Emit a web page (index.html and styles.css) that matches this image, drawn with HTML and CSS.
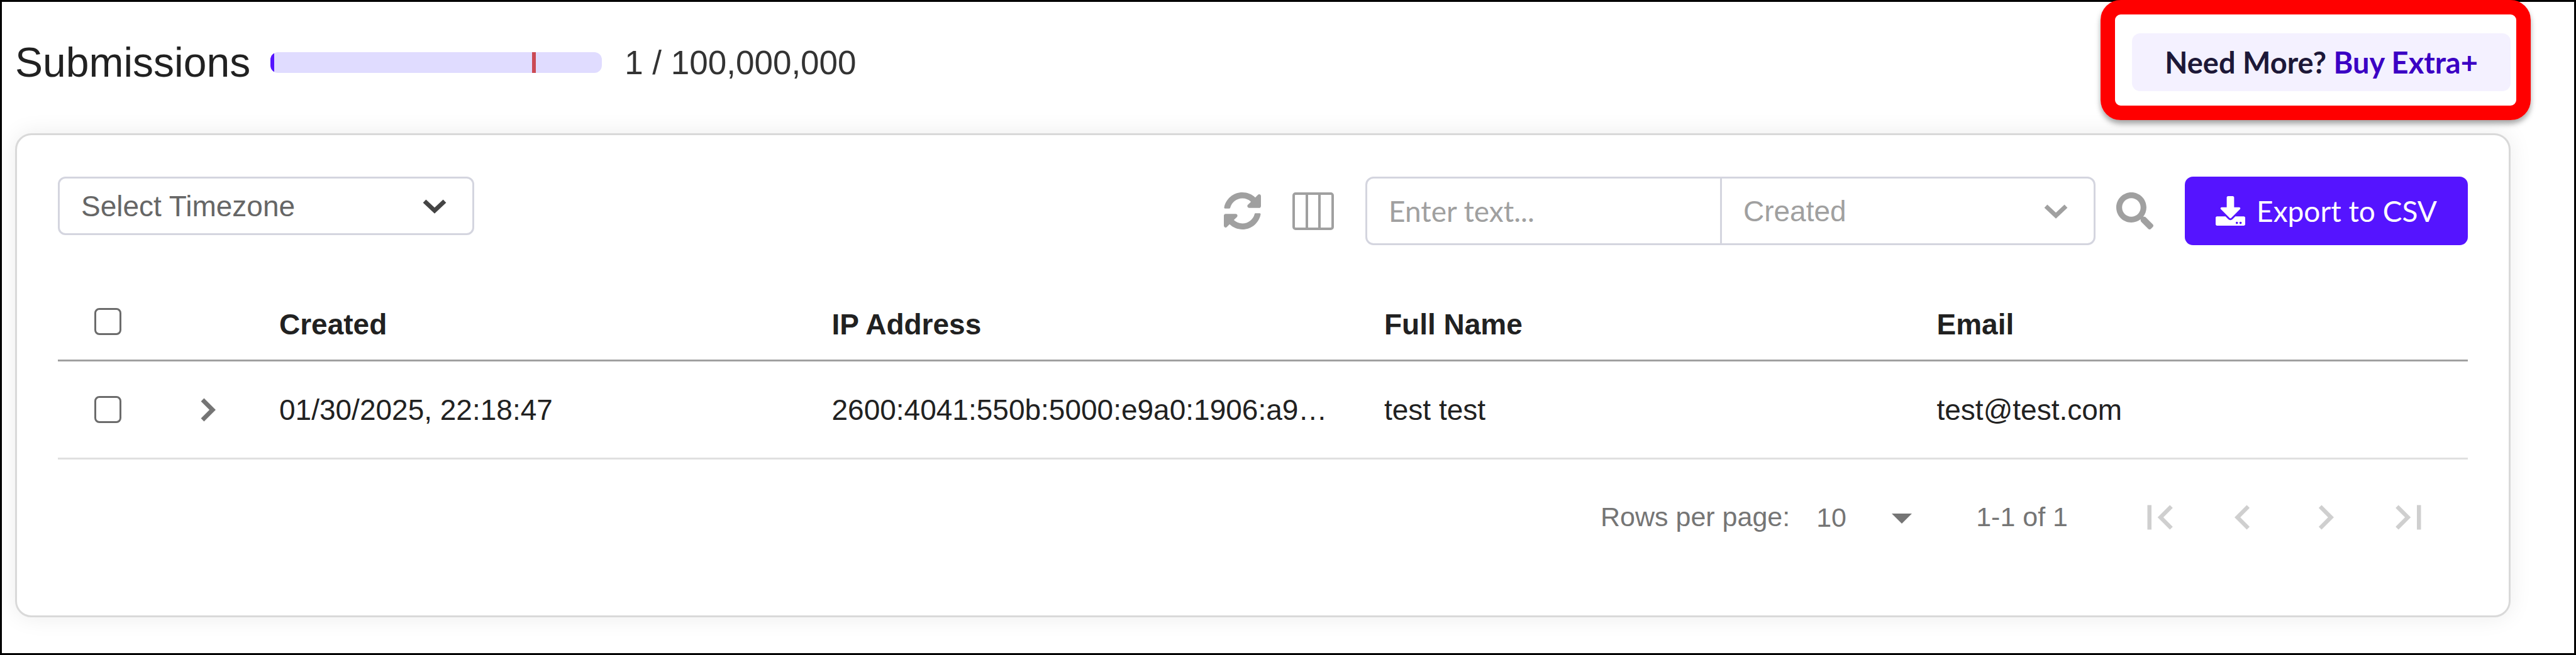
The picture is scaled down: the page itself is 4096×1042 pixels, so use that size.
FILE: index.html
```html
<!DOCTYPE html>
<html lang="en">
<head>
    <meta charset="UTF-8">
    <meta name="viewport" content="width=device-width, initial-scale=1.0">
    <title>Submissions</title>
    <link rel="stylesheet" href="styles.css">
</head>
<body>
    <div class="page">
        <header class="header">
            <h1>Submissions</h1>
            <div class="usage-bar" role="progressbar" aria-labelledby="usageCount" aria-valuemin="0" aria-valuemax="100000000" aria-valuenow="1">
                <div class="usage-fill"></div>
                <div class="usage-limit"></div>
            </div>
            <span class="usage-count" id="usageCount">1 / 100,000,000</span>
            <div class="upgrade">
                <a href="#" class="upgrade-link">Need More? <span>Buy Extra+</span></a>
                <div class="highlight"></div>
            </div>
        </header>

        <main class="card">
            <div class="toolbar">
                <div class="select-wrapper timezone">
                    <select aria-label="Timezone">
                        <option>Select Timezone</option>
                    </select>
                    <svg class="caret" viewBox="0 0 40 24"><path d="M4 4l16 15L36 4"/></svg>
                </div>

                <div class="tools">
                    <button class="icon-button" aria-label="Refresh">
                        <svg class="icon" viewBox="8 8 496 496"><path d="M370.72 133.28C339.458 104.008 298.888 87.962 255.848 88c-77.458.068-144.328 53.178-162.791 126.85-1.344 5.363-6.122 9.15-11.651 9.15H24.103c-7.498 0-13.194-6.807-11.807-14.176C33.933 94.924 134.813 8 256 8c66.448 0 126.791 26.136 171.315 68.685L463.03 40.97C478.149 25.851 504 36.559 504 57.941V192c0 13.255-10.745 24-24 24H345.941c-21.382 0-32.09-25.851-16.971-40.971l41.75-41.749zM32 296h134.059c21.382 0 32.09 25.851 16.971 40.971l-41.75 41.75c31.262 29.273 71.835 45.319 114.876 45.28 77.418-.07 144.315-53.144 162.787-126.849 1.344-5.363 6.122-9.15 11.651-9.15h57.304c7.498 0 13.194 6.807 11.807 14.176C478.067 417.076 377.187 504 256 504c-66.448 0-126.791-26.136-171.315-68.685L48.97 471.03C33.851 486.149 8 475.441 8 454.059V320c0-13.255 10.745-24 24-24z"/></svg>
                    </button>
                    <button class="icon-button columns" aria-label="Columns">
                        <svg class="icon icon-columns" viewBox="0 0 66 60"><rect x="2" y="2" width="62" height="56" rx="3"/><path d="M23 2v56M43 2v56"/></svg>
                    </button>
                    <div class="search-group">
                        <input type="text" class="search-input" placeholder="Enter text..." aria-label="Search text">
                        <div class="select-wrapper field">
                            <select aria-label="Search field">
                                <option>Created</option>
                            </select>
                            <svg class="caret" viewBox="0 0 40 24"><path d="M4 4l16 15L36 4"/></svg>
                        </div>
                    </div>
                    <button class="icon-button search" aria-label="Search">
                        <svg class="icon" viewBox="0 0 512 512"><path d="M505 442.7L405.3 343c-4.5-4.5-10.6-7-17-7H372c27.6-35.3 44-79.7 44-128C416 93.1 322.9 0 208 0S0 93.1 0 208s93.1 208 208 208c48.3 0 92.7-16.4 128-44v16.3c0 6.4 2.5 12.5 7 17l99.7 99.7c9.4 9.4 24.6 9.4 33.9 0l28.3-28.3c9.4-9.4 9.4-24.6.1-34zM208 336c-70.7 0-128-57.2-128-128 0-70.7 57.2-128 128-128 70.7 0 128 57.2 128 128 0 70.7-57.2 128-128 128z"/></svg>
                    </button>
                    <button class="export-button">
                        <svg viewBox="0 0 512 512"><path d="M216 0h80c13.3 0 24 10.7 24 24v168h87.7c17.8 0 26.7 21.5 14.1 34.1L269.7 378.3c-7.5 7.5-19.8 7.5-27.3 0L90.1 226.1c-12.6-12.6-3.7-34.1 14.1-34.1H192V24c0-13.3 10.7-24 24-24zm296 376v112c0 13.3-10.7 24-24 24H24c-13.3 0-24-10.7-24-24V376c0-13.3 10.7-24 24-24h146.7l49 49c20.1 20.1 52.5 20.1 72.6 0l49-49H488c13.3 0 24 10.7 24 24zm-124 88c0-11-9-20-20-20s-20 9-20 20 9 20 20 20 20-9 20-20zm64 0c0-11-9-20-20-20s-20 9-20 20 9 20 20 20 20-9 20-20z"/></svg>
                        Export to CSV
                    </button>
                </div>
            </div>

            <table class="table">
                <colgroup>
                    <col class="col-tool">
                    <col class="col-tool">
                    <col span="4">
                </colgroup>
                <thead>
                    <tr>
                        <th class="cell-tool"><input type="checkbox" aria-label="Select all rows"></th>
                        <th class="cell-tool"></th>
                        <th>Created</th>
                        <th>IP Address</th>
                        <th>Full Name</th>
                        <th>Email</th>
                    </tr>
                </thead>
                <tbody>
                    <tr>
                        <td class="cell-tool"><input type="checkbox" aria-label="Select row"></td>
                        <td class="cell-tool">
                            <button class="expand-button" aria-label="Expand row">
                                <svg viewBox="0 0 24 38"><path d="M3 3l16 16L3 35"/></svg>
                            </button>
                        </td>
                        <td>01/30/2025, 22:18:47</td>
                        <td>2600:4041:550b:5000:e9a0:1906:a9…</td>
                        <td>test test</td>
                        <td>test@test.com</td>
                    </tr>
                </tbody>
            </table>

            <nav class="pagination">
                <label for="rowsPerPage">Rows per page:</label>
                <div class="select-wrapper rows">
                    <select id="rowsPerPage">
                        <option>10</option>
                    </select>
                    <svg class="triangle" viewBox="0 0 32 16"><path d="M0 0h32L16 16z"/></svg>
                </div>
                <span class="range">1-1 of 1</span>
                <div class="pager">
                    <button disabled aria-label="First page"><svg viewBox="0 0 24 24"><path d="M18.41 16.59L13.82 12l4.59-4.59L17 6l-6 6 6 6zM6 6h2v12H6z"/></svg></button>
                    <button disabled aria-label="Previous page"><svg viewBox="0 0 24 24"><path d="M15.41 7.41L14 6l-6 6 6 6 1.41-1.41L10.83 12z"/></svg></button>
                    <button disabled aria-label="Next page"><svg viewBox="0 0 24 24"><path d="M10 6L8.59 7.41 13.17 12l-4.58 4.59L10 18l6-6z"/></svg></button>
                    <button disabled aria-label="Last page"><svg viewBox="0 0 24 24"><path d="M5.59 7.41L10.18 12l-4.59 4.59L7 18l6-6-6-6zM16 6h2v12h-2z"/></svg></button>
                </div>
            </nav>
        </main>
    </div>
</body>
</html>
```

FILE: styles.css
```css
* {
    margin: 0;
    padding: 0;
    box-sizing: border-box;
}

body {
    font-family: "Liberation Sans", Arial, sans-serif;
    font-size: 46px;
    background-color: #fff;
    color: #212121;
}

button,
input,
select {
    font: inherit;
    color: inherit;
    border: none;
    background: none;
    outline: none;
}

button {
    cursor: pointer;
}

svg {
    display: block;
}

.page {
    min-height: 100vh;
    padding: 0 101px 56px 21px;
    border: 3px solid #000;
}

/* Header */
.header {
    display: flex;
    align-items: center;
    padding: 50px 0 67px;
}

.header h1 {
    font-size: 66px;
    font-weight: 400;
    line-height: 92px;
}

.usage-bar {
    position: relative;
    width: 527px;
    height: 33px;
    margin: 0 36px 0 32px;
    border-radius: 12px;
    background-color: #e0dcff;
    overflow: hidden;
}

.usage-fill {
    width: 6px;
    height: 100%;
    background-color: #5514ff;
}

.usage-limit {
    position: absolute;
    top: 0;
    left: 79%;
    width: 6px;
    height: 100%;
    background-color: #cb4a54;
}

.usage-count {
    font-size: 53px;
    color: #333;
}

.upgrade {
    position: relative;
    margin-left: auto;
}

.upgrade-link {
    display: block;
    padding: 0 52px;
    border-radius: 13px;
    background-color: #f4f1ff;
    color: #1d1838;
    font-family: Lato, sans-serif;
    font-size: 47px;
    font-weight: 700;
    line-height: 92px;
    text-decoration: none;
}

.upgrade-link span {
    color: #3b00c4;
}

/* Callout frame drawn over the upgrade link */
.highlight {
    position: absolute;
    inset: -53px -32px -46px -50px;
    border: 23px solid #f00;
    border-radius: 32px;
    box-shadow: 0 6px 8px rgba(0, 0, 0, 0.35);
    pointer-events: none;
}

/* Card */
.card {
    padding: 66px 65px 65px;
    border: 3px solid #d9d9d9;
    border-radius: 26px;
    background-color: #fff;
    box-shadow: 0 0 36px rgba(0, 0, 0, 0.08);
}

.toolbar {
    display: flex;
    justify-content: space-between;
    align-items: flex-start;
}

.select-wrapper {
    position: relative;
}

.select-wrapper select {
    appearance: none;
    width: 100%;
    height: 100%;
}

.caret {
    position: absolute;
    top: 50%;
    right: 40px;
    width: 40px;
    height: 24px;
    transform: translateY(-50%);
    fill: none;
    stroke: currentColor;
    stroke-width: 7px;
}

.timezone {
    width: 662px;
    height: 93px;
    border: 3px solid #d4d5df;
    border-radius: 12px;
    color: #444;
}

.timezone select {
    padding-left: 34px;
    color: #666;
}

.tools {
    display: flex;
    align-items: center;
    color: #a0a0a0;
}

.icon {
    width: 59px;
    height: 59px;
    fill: currentColor;
}

.icon-columns {
    width: 66px;
    height: 60px;
    fill: none;
    stroke: currentColor;
    stroke-width: 4px;
}

.columns {
    margin: 0 50px;
}

.search-group {
    display: flex;
    width: 1161px;
    height: 109px;
    border: 3px solid #d4d5df;
    border-radius: 13px;
}

.search-input {
    flex: 1;
    min-width: 0;
    padding-left: 34px;
    font-family: Lato, sans-serif;
}

.search-input::placeholder {
    color: #a0a0a0;
}

.field {
    width: 594px;
    border-left: 3px solid #d4d5df;
}

.field select {
    padding-left: 34px;
}

.search {
    margin: 0 50px 0 33px;
}

.export-button {
    display: flex;
    align-items: center;
    justify-content: center;
    gap: 18px;
    width: 450px;
    height: 109px;
    border-radius: 13px;
    background-color: #5514ff;
    color: #fff;
    font-family: Lato, sans-serif;
}

.export-button svg {
    width: 47px;
    height: 47px;
    fill: currentColor;
}

/* Table */
.table {
    width: 100%;
    margin-top: 66px;
    table-layout: fixed;
    border-collapse: separate;
    border-spacing: 0;
}

.col-tool {
    width: 159px;
}

.table th,
.table td {
    padding: 0 34px;
    text-align: left;
    white-space: nowrap;
    vertical-align: middle;
}

.table th {
    height: 119px;
    padding-top: 4px;
    border-bottom: 3px solid #a0a0a0;
}

.table td {
    height: 156px;
    border-bottom: 3px solid #e0e0e0;
}

.table .cell-tool {
    padding: 0;
}

.table th.cell-tool {
    padding-bottom: 6px;
}

.cell-tool input {
    appearance: none;
    display: block;
    width: 43px;
    height: 43px;
    margin: 0 auto;
    border: 3px solid #6b6b6b;
    border-radius: 8px;
}

.expand-button {
    display: block;
    margin: 0 auto;
}

.expand-button svg {
    width: 24px;
    height: 38px;
    fill: none;
    stroke: #757575;
    stroke-width: 7px;
}

/* Pagination */
.pagination {
    display: flex;
    align-items: center;
    justify-content: flex-end;
    height: 183px;
    padding-right: 28px;
    font-size: 43px;
    color: #757575;
}

.rows {
    width: 152px;
    height: 60px;
    margin: 0 102px 0 42px;
}

.triangle {
    position: absolute;
    top: 24px;
    right: 0;
    width: 32px;
    height: 16px;
    fill: currentColor;
}

.pager {
    display: flex;
    margin-left: 80px;
}

.pager button {
    padding: 27px;
}

.pager svg {
    width: 78px;
    height: 78px;
    fill: #cfcfcf;
}
```
